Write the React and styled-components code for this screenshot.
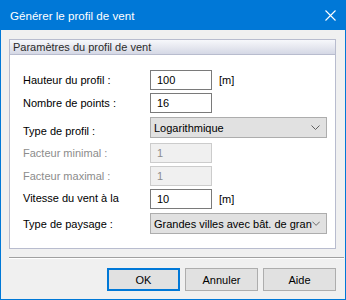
import React from 'react';
import styled, { createGlobalStyle } from 'styled-components';

const GlobalStyle = createGlobalStyle`
    html, body {
        margin: 0;
        padding: 0;
        background: #f0f0f0;
    }
    * {
        box-sizing: border-box;
    }
`;

const Window = styled.div`
    width: 346px;
    height: 300px;
    display: flex;
    flex-direction: column;
    border: 1px solid #0078d7;
    background-color: #f0f0f0;
    font-family: "Liberation Sans", Arial, sans-serif;
    font-size: 11px;
    color: #000;
`;

const TitleBar = styled.div`
    height: 29px;
    display: flex;
    align-items: center;
    justify-content: space-between;
    padding: 0 9px 0 9px;
    background-color: #0078d7;
    color: #fff;
    font-size: 11.6px;
`;

const CloseIcon = () => (
    <svg width="11" height="11" viewBox="0 0 11 11">
        <path d="M0.5 0.5 L10.5 10.5 M10.5 0.5 L0.5 10.5" stroke="#fff" strokeWidth="1.1" fill="none" />
    </svg>
);

const Body = styled.div`
    flex: 1;
    display: flex;
    flex-direction: column;
    padding: 9px 9px 0 8px;
`;

const GroupBox = styled.div`
    border: 1px solid #b8bcce;
    background-color: #fff;
`;

const GroupHeader = styled.div`
    height: 15px;
    display: flex;
    align-items: center;
    padding-left: 3px;
    border-bottom: 1px solid #b8bcce;
    background: linear-gradient(#f7f8fb, #d5d8e5);
    color: #2b2b2b;
`;

const Form = styled.div`
    display: flex;
    flex-direction: column;
    padding: 15px 8px 14px 13px;
`;

const Row = styled.div`
    display: grid;
    grid-template-columns: 127px 62px 1fr;
    align-items: center;
    margin-top: ${p => p.$gap || 0}px;
`;

const Label = styled.span`
    color: ${p => (p.$disabled ? '#8c8c8c' : '#000')};
    position: relative;
    top: ${p => p.$shift || 0}px;
    white-space: nowrap;
`;

const TextField = styled.div`
    height: 20px;
    display: flex;
    align-items: center;
    padding-left: 6px;
    border: 1px solid ${p => (p.$disabled ? '#cccccc' : '#7a7a7a')};
    background-color: ${p => (p.$disabled ? '#f0f0f0' : '#fff')};
    color: ${p => (p.$disabled ? '#8c8c8c' : '#000')};
`;

const Unit = styled.span`
    padding-left: 7px;
    position: relative;
    top: 0px;
`;

const Select = styled.div`
    grid-column: 2 / 4;
    height: 21px;
    display: flex;
    align-items: center;
    justify-content: space-between;
    padding: 0 6px 0 3px;
    border: 1px solid #adadad;
    background-color: #e1e1e1;
    white-space: nowrap;
`;

const Chevron = () => (
    <svg width="9" height="5" viewBox="0 0 9 5">
        <path d="M0.5 0.5 L4.5 4.5 L8.5 0.5" stroke="#606060" strokeWidth="1" fill="none" />
    </svg>
);

const Separator = styled.div`
    margin-top: 8px;
    height: 2px;
    border-top: 1px solid #a0a0a0;
    border-bottom: 1px solid #fff;
    margin-right: -8px;
`;

const ButtonRow = styled.div`
    display: flex;
    justify-content: flex-end;
    gap: 5px;
    margin-top: 9px;
`;

const Button = styled.button`
    width: 73px;
    height: 23px;
    padding: 0;
    font-family: inherit;
    font-size: 11px;
    color: #000;
    background-color: #e1e1e1;
    border: ${p => (p.$primary ? '2px solid #0078d7' : '1px solid #adadad')};
`;

const App = () => {
    return (
        <>
            <GlobalStyle />
            <Window>
                <TitleBar>
                    <span>Générer le profil de vent</span>
                    <CloseIcon />
                </TitleBar>
                <Body>
                    <GroupBox>
                        <GroupHeader>Paramètres du profil de vent</GroupHeader>
                        <Form>
                            <Row>
                                <Label>Hauteur du profil :</Label>
                                <TextField>100</TextField>
                                <Unit>[m]</Unit>
                            </Row>
                            <Row $gap={3}>
                                <Label>Nombre de points :</Label>
                                <TextField>16</TextField>
                            </Row>
                            <Row $gap={4}>
                                <Label $shift={3}>Type de profil :</Label>
                                <Select>
                                    <span>Logarithmique</span>
                                    <Chevron />
                                </Select>
                            </Row>
                            <Row $gap={5}>
                                <Label $disabled>Facteur minimal :</Label>
                                <TextField $disabled>1</TextField>
                            </Row>
                            <Row $gap={3}>
                                <Label $disabled>Facteur maximal :</Label>
                                <TextField $disabled>1</TextField>
                            </Row>
                            <Row $gap={3}>
                                <Label $shift={-1}>Vitesse du vent à la</Label>
                                <TextField>10</TextField>
                                <Unit>[m]</Unit>
                            </Row>
                            <Row $gap={4}>
                                <Label>Type de paysage :</Label>
                                <Select>
                                    <span>Grandes villes avec bât. de gran</span>
                                    <Chevron />
                                </Select>
                            </Row>
                        </Form>
                    </GroupBox>
                    <Separator />
                    <ButtonRow>
                        <Button $primary>OK</Button>
                        <Button>Annuler</Button>
                        <Button>Aide</Button>
                    </ButtonRow>
                </Body>
            </Window>
        </>
    );
};

export default App;
